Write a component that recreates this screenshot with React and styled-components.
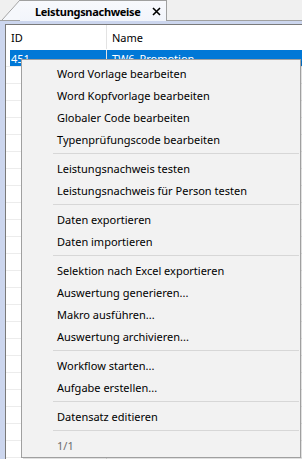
import styled, { createGlobalStyle } from "styled-components";

const Global = createGlobalStyle`
  html, body { margin: 0; padding: 0; background: #f0f0f0; }
  body { font-family: "Noto Sans", "Open Sans", sans-serif; font-size: 11px; color: #000; }
`;

const Window = styled.div`
  position: relative;
  width: 302px;
  height: 459px;
  overflow: hidden;
  background: #f0f0f0;
  display: flex;
  flex-direction: column;
`;

const TabStrip = styled.div`
  height: 20px;
  display: flex;
  align-items: flex-end;
  padding-left: 2px;
  position: relative;
  z-index: 2;
`;

const Slant = styled.div`
  width: 18px;
  height: 20px;
  background: linear-gradient(
    to bottom right,
    #f0f0f0 calc(50% - 0.7px),
    #a0a0a0 50%,
    #f6f8fc calc(50% + 0.7px)
  );
`;

const Tab = styled.div`
  box-sizing: border-box;
  display: flex;
  align-items: center;
  gap: 11px;
  padding: 0 5px 0 15px;
  border-top: 1px solid #a0a0a0;
  border-right: 1px solid #a0a0a0;
  background: linear-gradient(#f8f9fd, #f2f5fb);
  margin-bottom: -1px;
  height: 21px;
`;

const TabTitle = styled.span`
  font-weight: 700;
  font-size: 11px;
  letter-spacing: -0.3px;
`;

const Frame = styled.div`
  flex: 1;
  display: flex;
  flex-direction: column;
  border-top: 1px solid #a0a0a0;
  background: #ccd6ee;
  padding: 3px 0 0 5px;
`;

const Panel = styled.div`
  flex: 1;
  background: #fff;
  border-top: 1px solid #7a7a7a;
  border-left: 1px solid #7a7a7a;
`;

const Row = styled.div`
  display: grid;
  grid-template-columns: 101px 1fr;
  height: ${(p) => (p.$header ? 25 : 17)}px;
  box-sizing: border-box;
  border-bottom: 1px solid ${(p) => (p.$header ? "#fff" : "#ececec")};
  align-items: center;
`;

const Cell = styled.div`
  height: 100%;
  display: flex;
  align-items: center;
  padding-left: 5px;
  border-right: ${(p) => (p.$first ? "1px solid #e3e3e3" : "none")};
  white-space: nowrap;
  background: ${(p) => (p.$selected ? "#0078d7" : "transparent")};
  color: ${(p) => (p.$selected ? "#fff" : "#000")};
  box-shadow: ${(p) => (p.$selected && p.$first ? "inset 4px 0 0 #fff" : "none")};
`;

const Menu = styled.div`
  position: absolute;
  left: 21px;
  top: 59px;
  width: 280px;
  box-sizing: border-box;
  background: #f2f2f2;
  border: 1px solid #a0a0a0;
  box-shadow: 2px 2px 0 rgba(0, 0, 0, 0.12);
  padding: 2px 0 1px 2px;
  z-index: 5;
`;

const Item = styled.div`
  height: 22px;
  display: flex;
  align-items: center;
  padding-left: 33px;
  color: ${(p) => (p.$disabled ? "#6d6d6d" : "#000")};
  white-space: nowrap;
`;

const Separator = styled.div`
  height: 7px;
  display: flex;
  align-items: center;
  padding-left: 29px;
  padding-right: 1px;
  &::after {
    content: "";
    flex: 1;
    height: 1px;
    background: #d7d7d7;
  }
`;

const CloseIcon = () => (
  <svg width="9" height="9" viewBox="0 0 9 9">
    <path d="M1 1L8 8M8 1L1 8" stroke="#000" strokeWidth="1.6" />
  </svg>
);

const groups = [
  ["Word Vorlage bearbeiten", "Word Kopfvorlage bearbeiten", "Globaler Code bearbeiten", "Typenprüfungscode bearbeiten"],
  ["Leistungsnachweis testen", "Leistungsnachweis für Person testen"],
  ["Daten exportieren", "Daten importieren"],
  ["Selektion nach Excel exportieren", "Auswertung generieren...", "Makro ausführen...", "Auswertung archivieren..."],
  ["Workflow starten...", "Aufgabe erstellen..."],
  ["Datensatz editieren"],
];

const emptyRows = Array.from({ length: 24 });

export default function App() {
  return (
    <Window>
      <Global />
      <TabStrip>
        <Slant />
        <Tab>
          <TabTitle>Leistungsnachweise</TabTitle>
          <CloseIcon />
        </Tab>
      </TabStrip>
      <Frame>
        <Panel>
          <Row $header>
            <Cell $first>ID</Cell>
            <Cell>Name</Cell>
          </Row>
          <Row>
            <Cell $first $selected>451</Cell>
            <Cell $selected>TW6_Promotion</Cell>
          </Row>
          {emptyRows.map((_, i) => (
            <Row key={i}>
              <Cell $first />
              <Cell />
            </Row>
          ))}
        </Panel>
      </Frame>
      <Menu>
        {groups.map((g, gi) => (
          <div key={gi}>
            {g.map((label) => (
              <Item key={label}>{label}</Item>
            ))}
            <Separator />
          </div>
        ))}
        <Item $disabled>1/1</Item>
      </Menu>
    </Window>
  );
}
